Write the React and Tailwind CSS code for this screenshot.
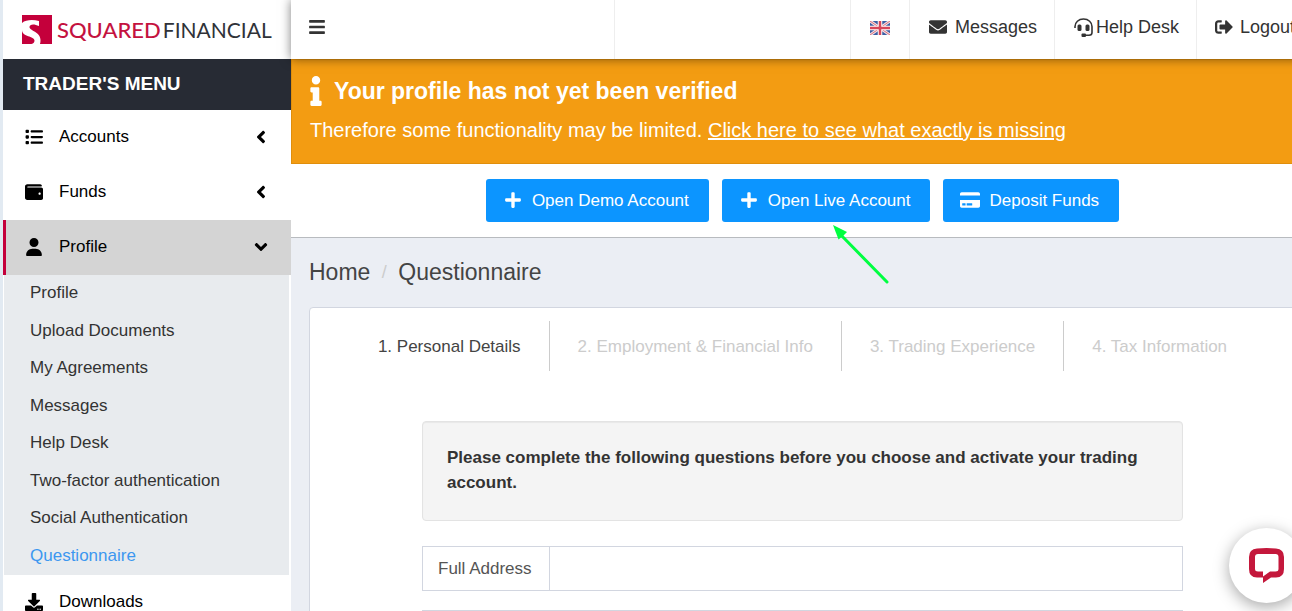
import React, { useState } from "react";
import {
  FaAngleDown,
  FaAngleLeft,
  FaBars,
  FaEnvelope,
  FaSignOutAlt,
  FaWallet,
  FaCreditCard,
  FaDownload,
  FaInfo,
  FaPlus,
} from "react-icons/fa";
import { FaList, FaUser } from "react-icons/fa6";

const profileLinks = [
  "Profile",
  "Upload Documents",
  "My Agreements",
  "Messages",
  "Help Desk",
  "Two-factor authentication",
  "Social Authentication",
  "Questionnaire",
];

const steps = [
  "1. Personal Details",
  "2. Employment & Financial Info",
  "3. Trading Experience",
  "4. Tax Information",
];

function Logo() {
  return (
    <a href="#" className="flex h-[59px] items-center gap-[5px] pl-[19px]">
      <svg width="30" height="29" viewBox="0 0 30 29" className="shrink-0">
        <rect width="30" height="29" fill="#c4003b" />
        <path
          d="M0 8C4 4.500 11 4.500 17 6V11C12 8.500 7.500 9 7.500 12C7.500 16 18.500 16.500 18.500 25C18.500 27 18.300 28 18 29H9.500C11.500 28.500 12.500 27.500 12.500 25.500C12.500 21 0 22 0 15Z"
          fill="#fff"
        />
      </svg>
      <span className="flex items-baseline gap-[2px] font-['Lato',sans-serif] text-[22px] leading-none text-[#2f3238]">
        <span className="font-medium text-[#c4123f]">SQUARED</span>
        <span className="text-[21px]">FINANCIAL</span>
      </span>
    </a>
  );
}

function FlagIcon() {
  return (
    <svg width="20" height="14" viewBox="0 0 20 14">
      <rect width="20" height="14" fill="#3c5fa5" />
      <path d="M0 0L20 14M20 0L0 14" stroke="#f3dfe3" strokeWidth="3" />
      <path d="M0 0L20 14M20 0L0 14" stroke="#d8707f" strokeWidth="1" />
      <path d="M10 0V14M0 7H20" stroke="#fff" strokeWidth="4.500" />
      <path d="M10 0V14M0 7H20" stroke="#d8455a" strokeWidth="2.500" />
    </svg>
  );
}

function HeadsetIcon() {
  return (
    <svg width="19" height="19" viewBox="0 0 19 19" fill="none">
      <path
        d="M1 10V8.500C1 4.500 4.500 1 9.500 1S18 4.500 18 8.500V14.500C18 16.500 17 17.300 15 17.300H11"
        stroke="#333"
        strokeWidth="1.600"
      />
      <rect x="3.500" y="6.500" width="4" height="6.500" rx="1.500" fill="#333" />
      <rect x="11.500" y="6.500" width="4" height="6.500" rx="1.500" fill="#333" />
      <rect x="7.500" y="15.500" width="4.500" height="3.500" rx="1" fill="#333" />
    </svg>
  );
}

function MenuItem({ icon, label, open, arrow = true }) {
  return (
    <button
      className={
        open
          ? "flex h-[55px] w-full items-center border-l-3 border-[#c4003b] bg-[#d4d4d4] pr-5 pb-[2px] pl-[19px] text-left"
          : "flex h-[55px] w-full items-center border-l-3 border-white bg-white pr-5 pb-[2px] pl-[19px] text-left"
      }
    >
      <span className="w-[34px]">{icon}</span>
      <span className="flex-1">{label}</span>
      {arrow && (open ? <FaAngleDown size={20} /> : <FaAngleLeft size={20} />)}
    </button>
  );
}

function Sidebar() {
  const [active, setActive] = useState("Questionnaire");

  return (
    <aside className="w-[291px] shrink-0 border-l-3 border-[#e2eaf2] bg-white text-black">
      <Logo />
      <h2 className="flex h-[51px] items-center bg-[#272b34] pb-[2px] pl-5 text-[19px] font-bold text-white">
        TRADER'S MENU
      </h2>
      <nav>
        <MenuItem icon={<FaList size={18} />} label="Accounts" />
        <MenuItem icon={<FaWallet size={18} />} label="Funds" />
        <MenuItem icon={<FaUser size={18} />} label="Profile" open />
        <ul className="mr-[2px] ml-px grid h-[300px] grid-rows-8 bg-[#e8ebee] pl-[26px]">
          {profileLinks.map((link) => (
            <li key={link} className="flex items-center pb-[2px]">
              <a
                href="#"
                onClick={() => setActive(link)}
                className={active === link ? "text-[#3c97f0]" : "text-[#333]"}
              >
                {link}
              </a>
            </li>
          ))}
        </ul>
        <MenuItem icon={<FaDownload size={18} />} label="Downloads" arrow={false} />
      </nav>
    </aside>
  );
}

function TopBar() {
  return (
    <header className="relative z-10 flex h-[59px] bg-white text-[18px] text-[#333] shadow-[0_0_10px_rgba(0,0,0,0.5)]">
      <div className="flex w-[324px] items-center border-r border-[#eee] pb-[5px] pl-[17px]">
        <button aria-label="Toggle menu">
          <FaBars size={18} />
        </button>
      </div>
      <div className="flex-1" />
      <a
        href="#"
        aria-label="Language"
        className="flex w-[60px] items-center justify-center border-x border-[#eee] pb-[3px]"
      >
        <FlagIcon />
      </a>
      <a href="#" className="flex w-[145px] items-center gap-2 border-r border-[#eee] pb-[5px] pl-[19px]">
        <FaEnvelope size={18} />
        Messages
      </a>
      <a href="#" className="flex w-[142px] items-center gap-[3px] border-r border-[#eee] pb-[5px] pl-[19px]">
        <HeadsetIcon />
        Help Desk
      </a>
      <a href="#" className="flex w-[117px] items-center gap-[7px] pb-[5px] pl-[18px]">
        <FaSignOutAlt size={18} />
        Logout
      </a>
    </header>
  );
}

function ActionButton({ icon, label }) {
  return (
    <button className="flex h-[43px] items-center gap-[9px] rounded-[3px] bg-[#0c95ff] pr-5 pb-px pl-[17px] text-white">
      <span className="flex w-5 justify-center">{icon}</span>
      {label}
    </button>
  );
}

function Arrow() {
  return (
    <svg width="60" height="62" viewBox="0 0 60 62" className="absolute top-[45px] left-[109px]">
      <path d="M8 9L56 58" stroke="#00ff40" strokeWidth="3" strokeLinecap="round" />
      <path d="M2 1L16 8L12.500 11.500L7.500 15.500Z" fill="#00ff40" />
    </svg>
  );
}

function ChatIcon() {
  return (
    <svg width="36" height="36" viewBox="0 0 36 36">
      <path
        fill="#c4183c"
        fillRule="evenodd"
        d="M8 0.500Q17.500 -0.500 27 0.500Q35 1 35 9V21Q35 29.500 27 29.500H22L14 35V29.500H8Q0 29.500 0 21V9Q0 1 8 0.500ZM9 6Q6 6 6 9V21Q6 23.500 9 23.500H14V28.500L21 23.500H26.500Q29.500 23.500 29.500 21V9Q29.500 6 26.500 6Z"
      />
    </svg>
  );
}

export default function App() {
  const [address, setAddress] = useState("");

  return (
    <div className="h-screen overflow-hidden font-['Liberation_Sans',Arial,sans-serif] text-[17px] leading-[25px]">
      <div className="flex min-h-full w-[calc(100%+22px)]">
        <Sidebar />

        <div className="min-w-0 flex-1 bg-[#ebeef4]">
          <TopBar />

          <section className="h-[105px] border border-[#e08e0b] bg-[#f39c12] px-[18px] pt-[14px] text-white">
            <h4 className="flex items-center gap-[3px] text-[23px] leading-[34px] font-bold">
              <FaInfo size={30} className="-ml-[9px]" />
              Your profile has not yet been verified
            </h4>
            <p className="mt-2 text-[20px] leading-[28px]">
              Therefore some functionality may be limited.{" "}
              <a href="#" className="underline">
                Click here to see what exactly is missing
              </a>
            </p>
          </section>

          <div className="flex h-[74px] items-start justify-center gap-[13px] border-b border-[#b8bbbf] bg-white pt-[15px]">
            <ActionButton icon={<FaPlus size={18} />} label="Open Demo Account" />
            <div className="relative">
              <ActionButton icon={<FaPlus size={18} />} label="Open Live Account" />
              <Arrow />
            </div>
            <ActionButton icon={<FaCreditCard size={20} />} label="Deposit Funds" />
          </div>

          <main className="px-[18px]">
            <nav className="flex h-[69px] items-center text-[23px] text-[#444]">
              <a href="#">Home</a>
              <span className="w-7 text-center text-[18px] text-[#ccc]">/</span>
              <span>Questionnaire</span>
            </nav>

            <div className="min-h-[340px] rounded-[4px] border border-[#d2d6e0] bg-white pt-[13px]">
              <ol className="flex h-[50px] items-center justify-center">
                {steps.map((step, index) => (
                  <li
                    key={step}
                    className={
                      index === 0
                        ? "flex h-full items-center px-7 text-[#444]"
                        : "flex h-full items-center border-l border-[#ccc] px-7 text-[#ccc]"
                    }
                  >
                    {step}
                  </li>
                ))}
              </ol>

              <form className="mx-28 mt-[50px]">
                <div className="h-[100px] rounded-[4px] border border-[#e3e3e3] bg-[#f4f4f4] px-6 py-[23px] font-bold text-[#333] shadow-[inset_0_1px_1px_rgba(0,0,0,0.05)]">
                  Please complete the following questions before you choose and
                  activate your trading account.
                </div>
                <div className="mt-[25px] flex h-[45px] border border-[#d2d6e0]">
                  <label
                    htmlFor="address"
                    className="flex w-[127px] items-center border-r border-[#d2d6e0] pb-px pl-[15px] text-[#555]"
                  >
                    Full Address
                  </label>
                  <input
                    id="address"
                    value={address}
                    onChange={(e) => setAddress(e.target.value)}
                    className="flex-1 px-4 outline-none"
                  />
                </div>
                <div className="mt-[19px] h-[45px] border border-[#d2d6e0]" />
              </form>
            </div>
          </main>
        </div>
      </div>

      <button
        aria-label="Open chat"
        className="fixed -right-3 bottom-2 z-20 flex size-[75px] items-center justify-center rounded-full bg-white shadow-[0_4px_16px_rgba(0,0,0,0.35)]"
      >
        <ChatIcon />
      </button>
    </div>
  );
}
